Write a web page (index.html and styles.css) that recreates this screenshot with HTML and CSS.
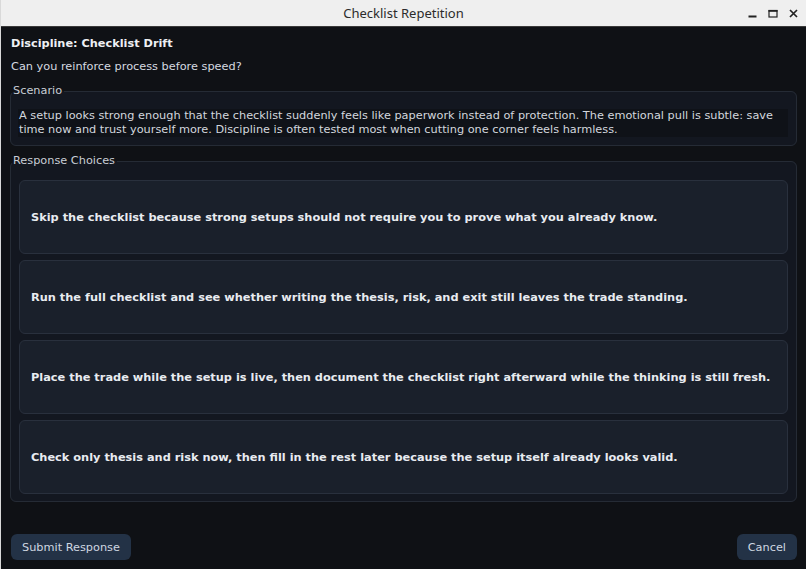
FILE: index.html
```html
<!doctype html>
<html lang="en">
  <head>
    <meta charset="UTF-8" />
    <title>Checklist Repetition</title>
    <link rel="stylesheet" href="styles.css">
  </head>
  <body>
    <div class="window">
      <div class="titlebar">
        <span class="title">Checklist Repetition</span>
        <div class="controls">
          <svg width="9" height="9" viewBox="0 0 9 9"><rect x="0.5" y="6.5" width="8" height="2" fill="#222"/></svg>
          <svg width="10" height="9" viewBox="0 0 10 9"><rect x="1" y="1.5" width="8" height="6.5" fill="none" stroke="#222" stroke-width="1.2"/><rect x="0.5" y="1" width="9" height="1.8" fill="#222"/></svg>
          <svg width="9" height="9" viewBox="0 0 9 9"><path d="M1 1 L8 8 M8 1 L1 8" stroke="#222" stroke-width="1.7"/></svg>
        </div>
      </div>

      <main class="content">
        <h1>Discipline: Checklist Drift</h1>
        <p class="question">Can you reinforce process before speed?</p>

        <fieldset class="group scenario">
          <legend>Scenario</legend>
          <div class="scenario-text">
            A setup looks strong enough that the checklist suddenly feels like paperwork instead of protection. The emotional pull is subtle: save time now and trust yourself more. Discipline is often tested most when cutting one corner feels harmless.
          </div>
        </fieldset>

        <fieldset class="group choices">
          <legend>Response Choices</legend>
          <button class="choice">Skip the checklist because strong setups should not require you to prove what you already know.</button>
          <button class="choice">Run the full checklist and see whether writing the thesis, risk, and exit still leaves the trade standing.</button>
          <button class="choice">Place the trade while the setup is live, then document the checklist right afterward while the thinking is still fresh.</button>
          <button class="choice">Check only thesis and risk now, then fill in the rest later because the setup itself already looks valid.</button>
        </fieldset>

        <div class="actions">
          <button class="btn">Submit Response</button>
          <button class="btn">Cancel</button>
        </div>
      </main>
    </div>
  </body>
</html>
```

FILE: styles.css
```css
html,
body {
  margin: 0;
  padding: 0;
}
body {
  font-family: "DejaVu Sans", sans-serif;
  font-size: 11.3px;
  background: #0f1115;
  color: #d6dae0;
}
.window {
  display: flex;
  flex-direction: column;
  height: 569px;
  border-left: 1px solid #d9d9d9;
  box-sizing: border-box;
}
.titlebar {
  position: relative;
  height: 26px;
  background: #efefef;
  border-bottom: 1px solid #3a3a3a;
  display: flex;
  align-items: center;
  justify-content: center;
}
.title {
  font-family: "Noto Sans", sans-serif;
  font-size: 13px;
  color: #2b2b2b;
}
.controls {
  position: absolute;
  right: 8px;
  top: 9px;
  display: flex;
  gap: 11px;
}
.content {
  flex: 1;
  display: flex;
  flex-direction: column;
  padding: 10px 9px 9px 9px;
}
h1 {
  margin: 0;
  font-size: 11.3px;
  line-height: 14px;
  font-weight: bold;
  color: #eef0f3;
  padding-left: 1px;
}
.question {
  margin: 9px 0 0;
  line-height: 14px;
  padding-left: 1px;
}
.group {
  margin: 0;
  border: 1px solid #252b35;
  border-radius: 6px;
  background: #131720;
  padding: 0 8px;
}
.group legend {
  padding: 0 2px 0 1px;
  margin-left: -7px;
  line-height: 14px;
  color: #c9ced6;
}
.scenario {
  margin-top: 10px;
  padding: 11px 8px 8px 7px;
}
.scenario .scenario-text {
  background: #0f1218;
  line-height: 14px;
  padding: 0 1px;
  color: #d3d7de;
}
.scenario legend {
  margin-left: -6px;
}
.choices {
  margin-top: 8px;
  padding-top: 12px;
  padding-bottom: 7px;
  display: flex;
  flex-direction: column;
  gap: 6px;
}
.choice {
  display: block;
  width: 100%;
  height: 74px;
  text-align: left;
  font-family: "DejaVu Sans", sans-serif;
  font-size: 11.35px;
  font-weight: bold;
  color: #e8ebf0;
  background: #1a202b;
  border: 1px solid #29303d;
  border-radius: 6px;
  padding: 0 11px;
}
.actions {
  margin-top: auto;
  display: flex;
  justify-content: space-between;
  padding-left: 1px;
}
.btn {
  height: 26px;
  padding: 0 11px;
  font-family: "DejaVu Sans", sans-serif;
  font-size: 11.3px;
  color: #cfd7e1;
  background: #233246;
  border: none;
  border-radius: 6px;
}
```
